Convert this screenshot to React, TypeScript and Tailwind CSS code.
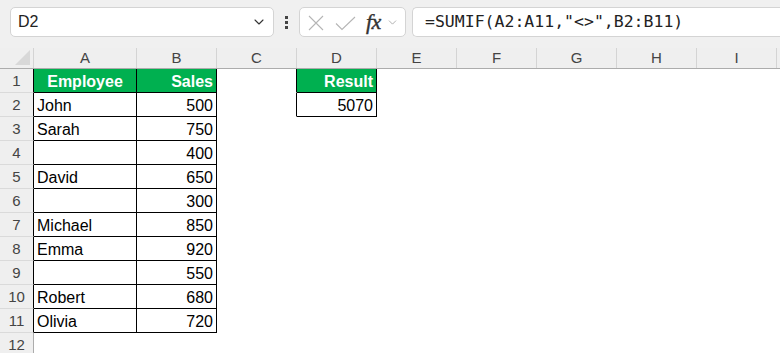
import { ChevronDown } from "lucide-react";

const COLS = ["A", "B", "C", "D", "E", "F", "G", "H", "I", ""];
const WIDTHS = [
	"w-[103px] shrink-0",
	"w-[80px] shrink-0",
	"w-[80px] shrink-0",
	"w-[80px] shrink-0",
	"w-[80px] shrink-0",
	"w-[80px] shrink-0",
	"w-[80px] shrink-0",
	"w-[80px] shrink-0",
	"w-[80px] shrink-0",
	"flex-1 min-w-0",
];

const DATA: Record<string, string> = {
	A1: "Employee",
	B1: "Sales",
	D1: "Result",
	A2: "John",
	B2: "500",
	D2: "5070",
	A3: "Sarah",
	B3: "750",
	B4: "400",
	A5: "David",
	B5: "650",
	B6: "300",
	A7: "Michael",
	B7: "850",
	A8: "Emma",
	B8: "920",
	B9: "550",
	A10: "Robert",
	B10: "680",
	A11: "Olivia",
	B11: "720",
};

// cells with thin black borders (the table and the result box)
const inRange = (r: number, c: number) =>
	((c === 0 || c === 1) && r >= 1 && r <= 11) || (c === 3 && (r === 1 || r === 2));

const isHeader = (r: number, c: number) => r === 1 && (c === 0 || c === 1 || c === 3);

function Cell({ r, c }: { r: number; c: number }) {
	const key = `${COLS[c]}${r}`;
	const value = DATA[key];
	const right = inRange(r, c) || inRange(r, c + 1);
	const bottom = inRange(r, c) || inRange(r + 1, c);
	const header = isHeader(r, c);
	const numeric = value !== undefined && /^\d+$/.test(value);
	return (
		<div
			className={`${WIDTHS[c]} h-full flex items-center border-r border-b px-[3px] pt-[2px] text-[16px] ${
				right ? "border-r-black" : "border-r-white"
			} ${bottom ? "border-b-black" : "border-b-white"} ${
				header ? "bg-[#00b050] text-white font-bold" : "bg-white text-black"
			} ${header && c === 0 ? "justify-center" : ""} ${
				numeric || (header && c !== 0) ? "justify-end" : ""
			}`}
		>
			{value}
		</div>
	);
}

export default function App() {
	const rows = Array.from({ length: 12 }, (_, i) => i + 1);
	return (
		<div className="w-[780px] h-[353px] overflow-hidden bg-white font-['Liberation_Sans',Arial,sans-serif]">
			{/* Formula bar */}
			<div className="h-[48px] bg-[#f0f0f0] flex items-start pt-[7px] pl-[10px]">
				<div className="w-[264px] shrink-0 h-[30px] bg-white border border-[#d4d4d4] rounded-[5px] flex items-center justify-between pl-[7px] pr-[6px]">
					<span className="text-[16px] text-[#222]">D2</span>
					<ChevronDown className="w-[16px] h-[16px] text-[#333]" strokeWidth={1.6} />
				</div>
				<div className="w-[25px] shrink-0 h-[30px] flex flex-col items-center justify-center gap-[2px]">
					<span className="w-[3px] h-[3px] bg-[#444]" />
					<span className="w-[3px] h-[3px] bg-[#444]" />
					<span className="w-[3px] h-[3px] bg-[#444]" />
				</div>
				<div className="w-[107px] shrink-0 h-[30px] bg-white border border-[#d4d4d4] rounded-[5px] flex items-center pl-[8px]">
					<svg width="16" height="16" viewBox="0 0 16 16" className="mt-[1px]">
						<path d="M1 1 L15 15 M15 1 L1 15" stroke="#b5b5b5" strokeWidth="1.1" fill="none" />
					</svg>
					<svg width="21" height="15" viewBox="0 0 21 15" className="ml-[11px] mt-[2px]">
						<path d="M1 7.5 L7 13.5 L20 1" stroke="#b5b5b5" strokeWidth="1.1" fill="none" />
					</svg>
					<span className="ml-[10px] text-[22px] italic font-['Liberation_Serif',serif] text-[#333] leading-none tracking-[-0.5px] [-webkit-text-stroke:0.4px_#333]">
						fx
					</span>
					<ChevronDown className="w-[13px] h-[13px] text-[#999] ml-[5px]" strokeWidth={1.4} />
				</div>
				<div className="flex-1 h-[30px] ml-[6px] bg-white border border-r-0 border-[#d4d4d4] rounded-l-[5px] flex items-center pl-[12px]">
					<span className="text-[16.5px] text-[#222] font-['DejaVu_Sans_Mono','Liberation_Mono',monospace]">
						=SUMIF(A2:A11,"&lt;&gt;",B2:B11)
					</span>
				</div>
			</div>

			{/* Column headers */}
			<div className="h-[21px] flex bg-[#efefef] border-b border-[#acacac]">
				<div className="w-[34px] shrink-0 h-full border-r border-[#d4d4d4] flex items-end justify-end pr-[3px] pb-[3px]">
					<svg width="15" height="15" viewBox="0 0 15 15">
						<polygon points="15,0 15,15 0,15" fill="#d8d8d8" />
					</svg>
				</div>
				{COLS.map((col, i) => (
					<div
						key={i}
						className={`${WIDTHS[i]} h-full flex items-center justify-center text-[15px] text-[#444] pt-[1px] ${
							i < COLS.length - 1 ? "border-r border-[#d4d4d4]" : ""
						}`}
					>
						{col}
					</div>
				))}
			</div>

			{/* Rows */}
			{rows.map((r) => (
				<div key={r} className="h-[24px] flex">
					<div
						className={`w-[34px] shrink-0 h-full bg-[#efefef] border-b border-b-[#dadada] border-r flex items-center justify-center text-[15px] text-[#444] pt-[1px] ${
							inRange(r, 0) ? "border-r-black" : "border-r-[#acacac]"
						}`}
					>
						{r}
					</div>
					{COLS.map((_, c) => (
						<Cell key={c} r={r} c={c} />
					))}
				</div>
			))}
		</div>
	);
}
